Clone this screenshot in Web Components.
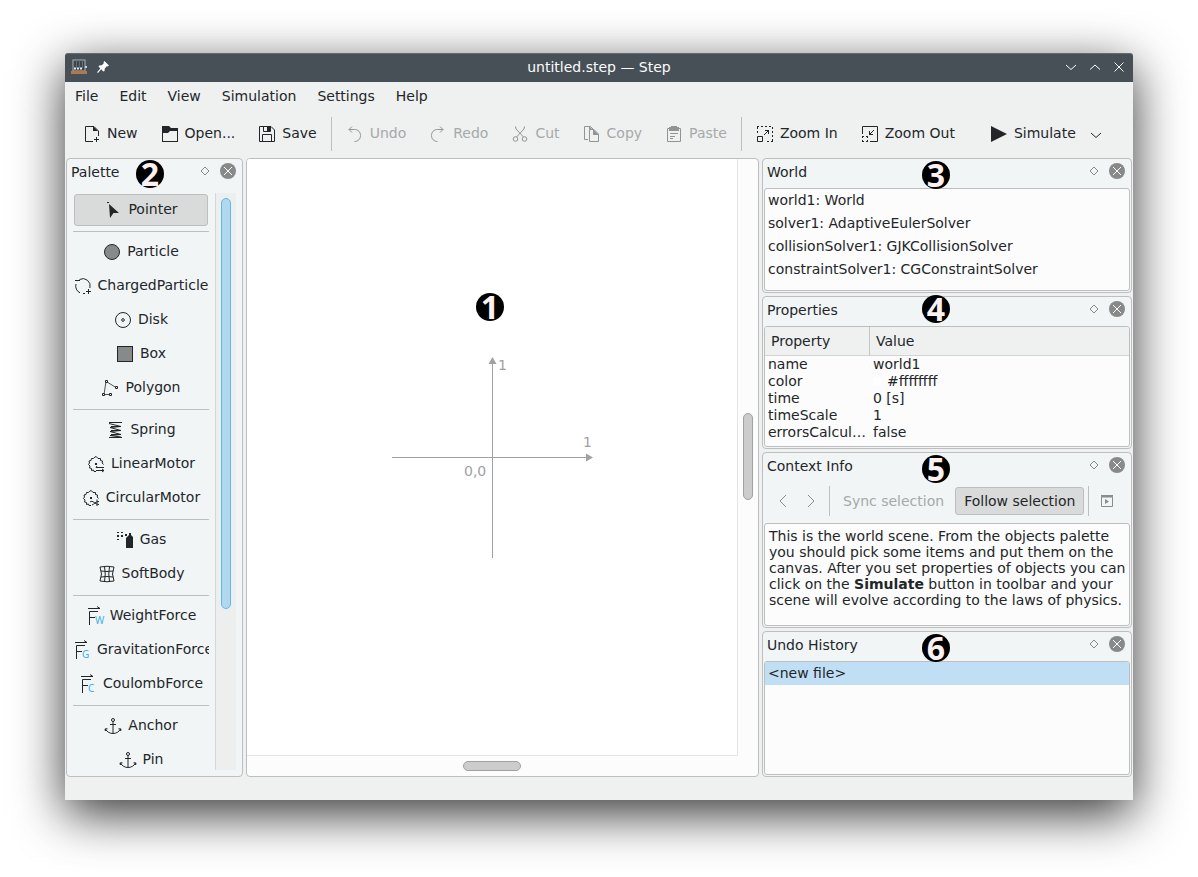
<!DOCTYPE html>
<html lang="en">
<head>
<meta charset="utf-8">
<title>untitled.step — Step</title>
<style>
  html, body { height: 100%; }
  body {
    margin: 0; box-sizing: border-box; padding: 53px 65px 77px; background: #fff; overflow: hidden;
    font: 14px/16px "DejaVu Sans", sans-serif; color: #232629;
    --window: #eff0f0; --dock: #f1f5f6; --view: #fcfcfc; --line: #bcbebf; --pressed: #d9dbda; --muted: #a6a9a9;
  }
</style>
</head>
<body>
<step-window></step-window>

<script>
const define = (tag, css, html, setup) => {
  const template = document.createElement('template');
  template.innerHTML = `<style>*{box-sizing:border-box}button{font:inherit;color:inherit;background:none;border:0;margin:0;padding:0}${css}</style>${html}`;
  customElements.define(tag, class extends HTMLElement {
    constructor() {
      super();
      this.attachShadow({ mode: 'open' }).append(template.content.cloneNode(true));
    }
    connectedCallback() { if (setup) setup(this, this.shadowRoot); }
  });
};

const force = letter => `<path d="M2.5 17V3.5H11M2.5 9.5H8"/><path d="M1 .5H13M10-1.5l3 2"/><text x="8" y="16" fill="#3daee9" stroke="none" font-size="10" font-family="Noto Sans, sans-serif">${letter}</text>`;
const gear = `<path d="M8 15.500H6L5.500 14 3.500 14.500 3.500 12.500 1.500 12 2 10 .5 8.500 1.500 7 1 5 3 4.500 3.500 2.500 5.500 2.500 7 .8 8.500 .8 10 2.500 12.500 2.500 12.500 4.500 14.500 5 14.200 7 15.500 8.500"/><rect x="7" y="7" width="2" height="2" fill="currentColor" stroke="none"/>`;
const anchor = `<circle cx="8" cy="2" r="1.500"/><path d="M8 3.500V15.500M5 6.500H11M0 11L1 13M16 11L15 13M.5 11C2 14 5 15.500 8 15.500S14 14 15.500 11M.3 13V10.800H2.500M15.700 13V10.800H13.500"/>`;
const icons = {
  app: `<rect x="2" y="1" width="12" height="11" fill="#3d454c" stroke="#a9b2ba"/><path d="M5.500 1V9M8.500 1V9M11.500 1V9" stroke="#66707a"/><path d="M3 9.500H12" stroke="#e8edf0" stroke-width="2" stroke-dasharray="2 1"/><rect y="12" width="16" height="3" fill="#b27a48" stroke="none"/><rect x="14" y="7" width="2" height="2" fill="#c7d0d6" stroke="none"/>`,
  pin: `<path fill="currentColor" stroke="none" d="M9.500 2L14 6.500 12.500 7.500 11.800 7.200 9.800 9.500 9.500 12 8.300 12.500 6.200 10.300 3 14 2 13.200 5.300 9.500 3.500 7.500 4.200 6.500 6.800 6.300 8.800 4.200 8.500 3.300Z"/>`,
  min: `<path d="M3 6L8 10.500 13 6"/>`,
  max: `<path d="M3 10.500L8 6 13 10.500"/>`,
  quit: `<path d="M3.500 3.500L12.500 12.500M12.500 3.500L3.500 12.500"/>`,
  new: `<path d="M9 15.500H1.500V.5H10L14.500 5V10M12.500 11V16M10 13.500H15"/><path fill="currentColor" stroke="none" d="M9 0V5H14Z"/>`,
  open: `<path fill="currentColor" stroke="none" fill-rule="evenodd" d="M0 0H7L9 2H16V16H0ZM1 7V15H15V5H8L6 7Z"/>`,
  save: `<path d="M.5 .5H12L15.500 4V15.500H.5ZM4.500 .5V5.500H11.500V.5M3.500 15.500V8.500H12.500V15.500"/><path fill="currentColor" stroke="none" d="M8 1H11V5H8Z"/>`,
  undo: `<path d="M2 3.500H7.500C11 3.500 13.500 6 13.500 9.500S11 15.500 7.500 15.500M5 .5L2 3.500 5 6.500"/>`,
  redo: `<path d="M13 3.500H7.500C4 3.500 1.500 6 1.500 9.500S4 15.500 7.500 15.500M10 .5L13 3.500 10 6.500"/>`,
  cut: `<circle cx="3.500" cy="13" r="2.300"/><circle cx="12.500" cy="13" r="2.300"/><path d="M3.500 .5L4 3 11.500 11M12.500 .5L12 3 4.500 11"/>`,
  copy: `<path d="M4 13.500H.5V.5H6.500L9 3M5.500 3.500H10L14.500 8V15.500H5.500Z"/><path fill="currentColor" stroke="none" d="M5 0V3H8ZM9 3V9H15Z"/>`,
  paste: `<path d="M3 2.500H1.500V15.500H14.500V2.500H13M4 7.500H12M4 10.500H9M4 12.500H7"/><path fill="currentColor" stroke="none" d="M5 0H11V1H13V5H3V1H5Z"/>`,
  zoomin: `<path stroke-dasharray="2 2" d="M0 .5H16M.5 1V9M15.500 1V16M16 15.500H8"/><path d="M.5 10.500H5.500V15.500H.5ZM7 9L12 4M8 4.500H11.500V8"/>`,
  zoomout: `<path d="M.5 8V.5H15.500V15.500H8M12 4L7 9M7.500 5V8.500H11"/><path stroke-dasharray="2 2" d="M0 10.500H6M.5 10V16M0 15.500H6M5.500 10V16"/>`,
  play: `<path fill="currentColor" stroke="none" d="M0 0L16 8 0 16Z"/>`,
  pointer: `<path fill="currentColor" stroke="none" d="M4 2L14 11H8.500L5 16ZM2 0H4V1H2Z"/>`,
  particle: `<circle cx="8" cy="8" r="7.500" fill="#888a8a"/>`,
  charged: `<path d="M5 14.800A7.300 7.300 0 0 1 1 6M4.500 1.500A7.300 7.300 0 0 1 14.900 10M8 15.500H10M0 2.500H5M13.500 11V16M11 13.500H16"/>`,
  disk: `<circle cx="8" cy="8" r="7.500"/><circle cx="8" cy="8" r="1.300"/>`,
  box: `<rect x=".5" y=".5" width="15" height="15" fill="#888a8a"/>`,
  polygon: `<path stroke-width=".8" d="M4 1.500L2 14.500H9.500M5 2L14 7.500"/><path fill="#f1f5f6" d="M3.500 .5H5.500V2.500H3.500ZM13.500 6.500H15.500V8.500H13.500ZM.5 13.500H2.500V15.500H.5ZM7.500 13.500H9.500V15.500H7.500Z"/>`,
  spring: `<path d="M2 .5H15M2 15.500H15M2 1.500L14 4.500 3 5.500 14 8.500 3 9.500 14 12.500 3 13.500 14 15M4 4.500H14M4 8.500H14M4 12.500H14"/>`,
  linear: gear + `<path d="M8 11.500H16M9 10L8 11.500M8 14.500H16M14 13L16 14.500 14 16"/>`,
  circular: gear + `<path d="M7 12C10 9.500 11.500 14.500 16 14.500M9 15C11 14.500 12 11.500 16 11.500M14 9.500V13M14 13V16"/>`,
  gas: `<path fill="currentColor" stroke="none" d="M10 5L12 3V1H14V3L16 5V16H9V6ZM0 0H2V1H0ZM4 0H6V1H4ZM0 3H2V5H0ZM4 3H6V5H4ZM8 2H10V4H8ZM0 7H2V8H0Z"/>`,
  soft: `<path d="M1 1Q8-.5 15 1Q12 8 15 15Q8 16.500 1 15Q4 8 1 1ZM5.500 .5Q7 8 5.500 15.500M10.500 .5Q9 8 10.500 15.500M2 5Q8 6 14 5M2 11Q8 10 14 11"/>`,
  weight: force('W'), gravitation: force('G'), coulomb: force('C'),
  anchor,
  back: `<path d="M11 2L5 8 11 14"/>`,
  forward: `<path d="M5 2L11 8 5 14"/>`,
  external: `<path d="M2.500 3.500H13.500V13.500H2.500ZM2 2.500H14M2 4H14"/><path fill="currentColor" stroke="none" d="M6 6L10 8.500 6 11Z"/>`,
  float: `<path d="M8 4L12 8 8 12 4 8Z"/>`,
  close: `<circle cx="8" cy="8" r="8" fill="currentColor" stroke="none"/><path stroke="#fff" d="M4 4L12 12M12 4L4 12"/>`
};

define('step-icon',
  `:host{display:block;flex:none;width:16px;height:16px}svg{display:block;overflow:visible}`,
  `<svg width="16" height="16" viewBox="0 0 16 16" fill="none" stroke="currentColor" aria-hidden="true"></svg>`,
  (el, root) => { root.querySelector('svg').innerHTML = icons[el.getAttribute('name')] || ''; });

define('step-callout',
  `:host{position:absolute;z-index:2;width:28px;height:28px;border-radius:50%;background:#000;color:#fdf0f0;
     font:700 32px/28px "Noto Sans","Open Sans",sans-serif;text-align:center}`,
  `<slot></slot>`);

define('step-title-bar',
  `:host{display:grid;grid-template-columns:1fr auto 1fr;align-items:center;height:29px;padding-bottom:2px;box-sizing:border-box;background:#475057;color:#fcfcfc;
     border-radius:3px 3px 0 0;border-top:1px solid #646c72}
   div{display:flex;align-items:center}.start{gap:8px;padding-left:6px}.end{justify-content:flex-end;padding-right:2px}
   h1{font:inherit;margin:0}button{width:24px;height:24px;padding:4px}`,
  `<div class="start"><step-icon name="app"></step-icon><step-icon name="pin"></step-icon></div>
   <h1><slot></slot></h1>
   <div class="end"><button aria-label="Minimize"><step-icon name="min"></step-icon></button><button aria-label="Maximize"><step-icon name="max"></step-icon></button><button aria-label="Close"><step-icon name="quit"></step-icon></button></div>`);

define('step-menu-bar',
  `:host{display:flex;gap:1px;height:28px}button{padding:0 10px}`,
  ['File', 'Edit', 'View', 'Simulation', 'Settings', 'Help'].map(t => `<button>${t}</button>`).join(''));

define('step-tool',
  `:host{display:block}button{display:flex;align-items:center;height:32px;gap:7px;padding:0 12px 2px;white-space:nowrap}
   button:disabled{color:var(--muted)}button:disabled step-icon{color:#929494}step-icon{position:relative;top:1px}`,
  `<button><step-icon></step-icon><slot></slot></button>`,
  (el, root) => {
    root.querySelector('button').disabled = el.hasAttribute('disabled');
    root.querySelector('step-icon').replaceWith(Object.assign(document.createElement('template'), { innerHTML: `<step-icon name="${el.getAttribute('icon')}"></step-icon>` }).content);
  });

define('step-tool-bar',
  `:host{display:flex;align-items:center;height:48px;padding-left:7px}
   hr{flex:none;border:0;width:1px;height:34px;margin:0 3px 0 2px;background:var(--line)}.run{margin-left:12px}
   .more{width:16px;height:32px;padding-top:1px}`,
  `<step-tool icon="new">New</step-tool><step-tool icon="open">Open...</step-tool><step-tool icon="save">Save</step-tool><hr>
   <step-tool icon="undo" disabled>Undo</step-tool><step-tool icon="redo" disabled>Redo</step-tool><step-tool icon="cut" disabled>Cut</step-tool>
   <step-tool icon="copy" disabled>Copy</step-tool><step-tool icon="paste" disabled>Paste</step-tool><hr>
   <step-tool icon="zoomin">Zoom In</step-tool><step-tool icon="zoomout">Zoom Out</step-tool>
   <step-tool class="run" icon="play">Simulate</step-tool><button class="more" aria-label="Simulation options"><step-icon name="min"></step-icon></button>`);

define('step-dock',
  `:host{display:flex;flex-direction:column;position:relative;min-height:0;min-width:0;background:var(--dock);border:1px solid var(--line);border-radius:4px;padding:0 1px 1px}
   header{display:flex;align-items:center;flex:none;height:29px;padding:0 5px 3px 3px}
   h2{font:inherit;margin:0;flex:1}button{width:16px;height:16px;margin-bottom:2px;color:#888a8a}button+button{margin-left:7px}`,
  `<header><h2></h2><button aria-label="Float"><step-icon name="float"></step-icon></button><button aria-label="Close"><step-icon name="close"></step-icon></button></header>
   <slot></slot><slot name="callout"></slot>`,
  (el, root) => { root.querySelector('h2').textContent = el.getAttribute('label'); });

define('step-frame',
  `:host{display:block;flex:1;min-height:0;overflow:hidden;background:var(--view);border:1px solid var(--line);border-radius:3px}`,
  `<slot></slot>`);

const groups = [
  [['pointer', 'Pointer']],
  [['particle', 'Particle'], ['charged', 'ChargedParticle'], ['disk', 'Disk'], ['box', 'Box'], ['polygon', 'Polygon']],
  [['spring', 'Spring'], ['linear', 'LinearMotor'], ['circular', 'CircularMotor']],
  [['gas', 'Gas'], ['soft', 'SoftBody']],
  [['weight', 'WeightForce'], ['gravitation', 'GravitationForce'], ['coulomb', 'CoulombForce']],
  [['anchor', 'Anchor'], ['anchor', 'Pin']]
];
define('step-palette',
  `:host{display:grid;grid-template-columns:1fr 21px;gap:6px;flex:1;min-height:0;padding:5px}
   .list{display:flex;flex-direction:column;gap:2px;min-height:0;min-width:0;overflow:hidden;padding-top:1px}
   button{display:flex;align-items:center;justify-content:safe center;gap:7px;height:32px;padding:0 0 2px 1px;flex:none;overflow:hidden;white-space:nowrap}
   button step-icon{position:relative;top:1px}
   button[aria-pressed=true]{margin:0 1px;background:var(--pressed);border:1px solid var(--line);border-radius:3px}
   hr{flex:none;width:100%;height:1px;margin:3px 0 2px;border:0;background:var(--line)}
   .track{border-left:1px solid #d5d8d9;background:#edefee;padding:5px}
   .thumb{height:411px;max-height:100%;background:#b0d8ef;border:1px solid #5fb9ec;border-radius:5px}`,
  `<div class="list">${groups.map(g => g.map(([i, t]) => `<button aria-pressed="${t === 'Pointer'}"><step-icon name="${i}"></step-icon>${t}</button>`).join('')).join('<hr>')}</div>
   <div class="track"><div class="thumb"></div></div>`);

define('step-canvas',
  `:host{display:grid;grid-template:1fr 20px / 1fr 20px;min-width:0;min-height:0;background:var(--view);border:1px solid var(--line);border-radius:4px;overflow:hidden;position:relative}
   .scene{display:grid;place-items:center;background:#fff;border:solid #e4e5e5;border-width:0 1px 1px 0;position:relative;min-height:0}
   svg{display:block;overflow:visible}text{font:14px "DejaVu Sans",sans-serif;fill:#a0a2a2}
   .v,.h{display:grid;place-content:center}
   i{display:block;background:#cbcccb;border:1px solid #a0a2a2;border-radius:5px}
   .v{align-content:start;padding-top:254px}.v i{width:10px;height:87px}.h{padding-right:2px}.h i{width:58px;height:10px}
   step-callout{left:229px;top:134px}`,
  `<div class="scene"><svg width="200" height="200" viewBox="0 0 200 200" role="img" aria-label="Coordinate axes">
     <path d="M0 100.500H195M100.500 201V6" stroke="#a0a2a2"/><path d="M201 100.500L194 96.500V104.500ZM100.500 0L96.500 7H104.500Z" fill="#a0a2a2"/>
     <text x="106" y="13">1</text><text x="191" y="90">1</text><text x="72" y="119">0,0</text></svg>
     <step-callout>1</step-callout></div>
   <div class="v"><i></i></div><div class="h"><i></i></div>`);

define('step-world',
  `:host{display:block}ul{list-style:none;margin:0;padding:0}li{line-height:23px;padding:0 3px}`,
  `<ul>${['world1: World', 'solver1: AdaptiveEulerSolver', 'collisionSolver1: GJKCollisionSolver', 'constraintSolver1: CGConstraintSolver'].map(t => `<li>${t}</li>`).join('')}</ul>`);

define('step-properties',
  `:host{display:block}table{width:100%;table-layout:fixed;border-collapse:separate;border-spacing:0}
   th{font-weight:400;text-align:left;height:29px;padding:0 6px;background:var(--window);border-bottom:1px solid #d2d4d4}
   th:first-child{width:105px;border-right:1px solid #c6c4bd}
   td{height:17px;line-height:17px;padding:0 3px;white-space:nowrap;overflow:hidden;text-overflow:ellipsis}
   i{display:inline-block;width:8px;height:8px;margin-right:6px;background:#fff}`,
  `<table><thead><tr><th>Property</th><th>Value</th></tr></thead><tbody>
   <tr><td>name</td><td>world1</td></tr><tr><td>color</td><td><i></i>#ffffffff</td></tr><tr><td>time</td><td>0 [s]</td></tr>
   <tr><td>timeScale</td><td>1</td></tr><tr><td>errorsCalculation</td><td>false</td></tr></tbody></table>`);

define('step-context-bar',
  `:host{display:flex;align-items:center;flex:none;height:41px;padding:0 4px 4px 5px}
   button{flex:none;height:28px;white-space:nowrap}.nav{width:28px;padding:0 6px;color:#8b8d8d}.label{padding:0 9px}
   .label:disabled{color:var(--muted)}[aria-pressed]{margin-left:2px;background:var(--pressed);border:1px solid var(--line);border-radius:3px}
   [aria-pressed].label{padding:0 8px}
   hr{flex:none;border:0;width:1px;height:30px;margin:0 4px;background:var(--line)}`,
  `<button class="nav" aria-label="Back"><step-icon name="back"></step-icon></button><button class="nav" aria-label="Forward"><step-icon name="forward"></step-icon></button><hr>
   <button class="label" disabled>Sync selection</button><button class="label" aria-pressed="true">Follow selection</button><hr>
   <button class="nav" aria-label="Open in browser"><step-icon name="external"></step-icon></button>`);

define('step-info',
  `:host{display:block;padding:4px 0 4px 4px}p{margin:0}`,
  `<p>This is the world scene. From the objects palette you should pick some items and put them on the canvas. After you set properties of objects you can click on the <b>Simulate</b> button in toolbar and your scene will evolve according to the laws of physics.</p>`);

define('step-history',
  `:host{display:block}ul{list-style:none;margin:0;padding:0}li{line-height:23px;padding:0 3px;background:#c1dff4}`,
  `<ul><li>&lt;new file&gt;</li></ul>`);

define('step-window',
  `:host{display:flex;flex-direction:column;height:100%;background:var(--window);border-radius:3px 3px 0 0;box-shadow:0 14px 50px rgba(0,0,0,.8)}
   main{display:grid;grid-template-columns:177px 1fr 370px;gap:3px;flex:1;min-height:0;padding:0 1px}
   .side{display:grid;grid-template-rows:135px 153px 176px 1fr;grid-template-columns:1fr;gap:3px;min-height:0}
   .side step-callout{left:159px;top:2px}.palette step-callout{left:69px;top:1px}.side .high{top:-2px}
   footer{height:23px;flex:none}`,
  `<step-title-bar>untitled.step — Step</step-title-bar><step-menu-bar></step-menu-bar><step-tool-bar></step-tool-bar>
   <main>
     <step-dock class="palette" label="Palette"><step-palette></step-palette><step-callout slot="callout">2</step-callout></step-dock>
     <step-canvas></step-canvas>
     <div class="side">
       <step-dock label="World"><step-frame><step-world></step-world></step-frame><step-callout slot="callout">3</step-callout></step-dock>
       <step-dock label="Properties"><step-frame><step-properties></step-properties></step-frame><step-callout class="high" slot="callout">4</step-callout></step-dock>
       <step-dock label="Context Info"><step-context-bar></step-context-bar><step-frame><step-info></step-info></step-frame><step-callout slot="callout">5</step-callout></step-dock>
       <step-dock label="Undo History"><step-frame><step-history></step-history></step-frame><step-callout slot="callout">6</step-callout></step-dock>
     </div>
   </main><footer></footer>`);
</script>
</body>
</html>
